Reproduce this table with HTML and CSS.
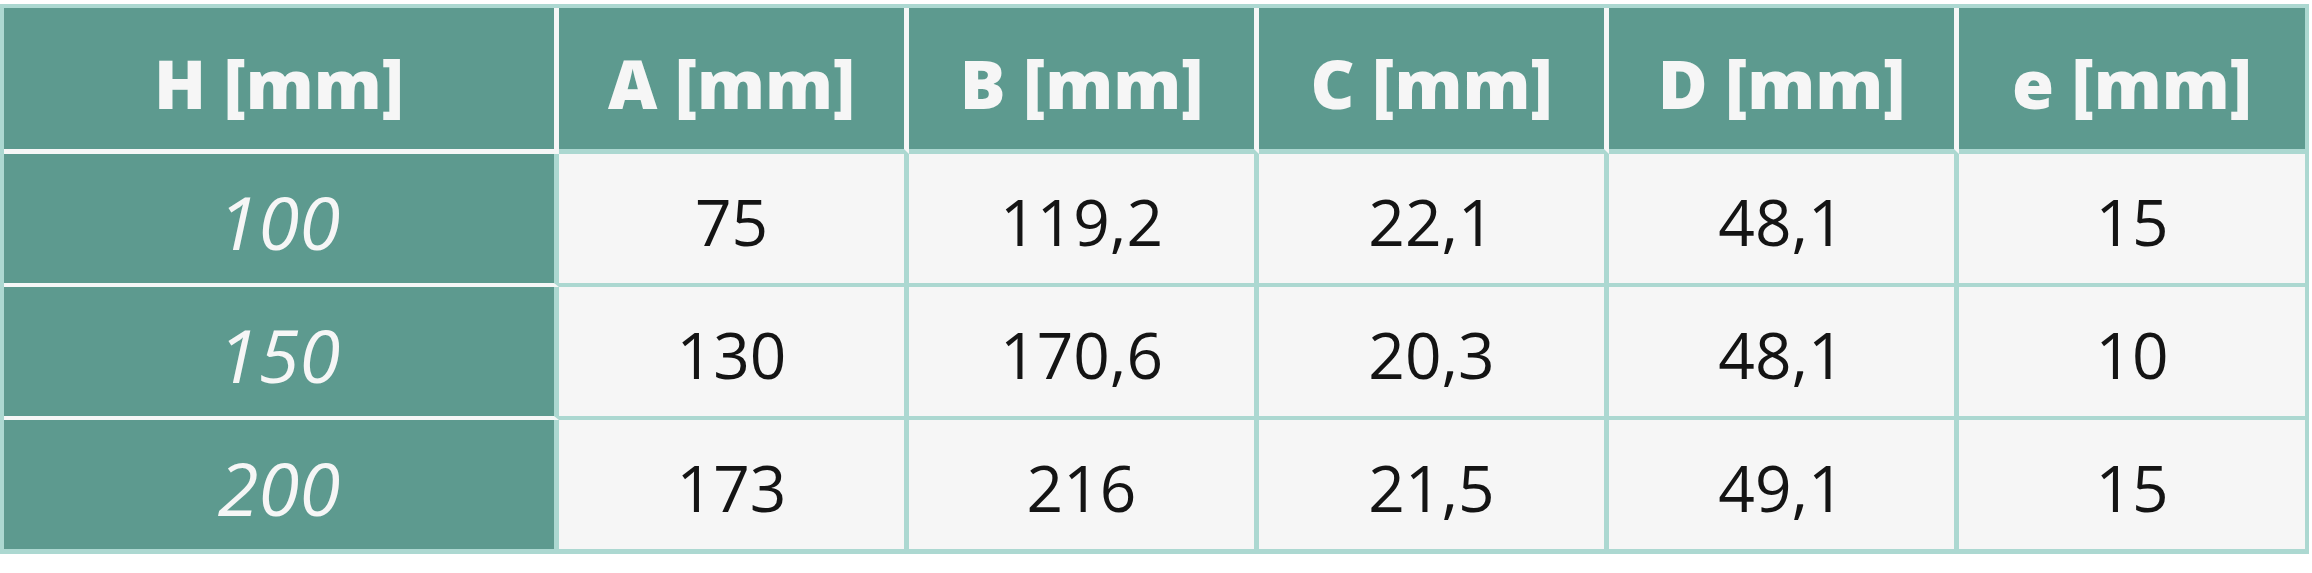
FILE: index.html
```html
<!DOCTYPE html>
<html lang="de">
<head>
<meta charset="utf-8">
<title>Maße</title>
<link rel="stylesheet" href="styles.css">
</head>
<body>
<table class="dims">
  <thead>
    <tr>
      <th class="c-first">H [mm]</th>
      <th>A [mm]</th>
      <th>B [mm]</th>
      <th>C [mm]</th>
      <th>D [mm]</th>
      <th class="c-last">e [mm]</th>
    </tr>
  </thead>
  <tbody>
    <tr>
      <td class="c-first">100</td>
      <td>75</td>
      <td>119,2</td>
      <td>22,1</td>
      <td>48,1</td>
      <td class="c-last">15</td>
    </tr>
    <tr>
      <td class="c-first">150</td>
      <td>130</td>
      <td>170,6</td>
      <td>20,3</td>
      <td>48,1</td>
      <td class="c-last">10</td>
    </tr>
    <tr class="r-last">
      <td class="c-first">200</td>
      <td>173</td>
      <td>216</td>
      <td>21,5</td>
      <td>49,1</td>
      <td class="c-last">15</td>
    </tr>
  </tbody>
</table>
</body>
</html>
```

FILE: styles.css
```css
html, body {
  margin: 0;
  padding: 0;
  background: #ffffff;
}

body {
  padding-top: 4px;
}

.dims {
  width: 2309px;
  table-layout: fixed;
  border-collapse: separate;
  border-spacing: 0;
  border-top: 4px solid #acd8d1;
  border-left: 4px solid #acd8d1;
  font-family: "Open Sans", "Noto Sans", sans-serif;
}

.dims th,
.dims td {
  box-sizing: border-box;
  padding: 0;
  text-align: center;
  vertical-align: middle;
  white-space: nowrap;
}

.dims th {
  width: 350px;
  height: 146px;
  background: #5d9a8f;
  color: #f6f6f6;
  font-weight: 800;
  font-size: 68px;
  line-height: 1;
  padding-top: 9px;
  border-right: 5px solid #f6f7f7;
  border-bottom: 5px solid #acd8d1;
}

.dims th.c-first {
  width: 555px;
  border-bottom-color: #f6f7f7;
}

.dims th.c-last {
  border-right: 4px solid #acd8d1;
}

.dims td {
  height: 133px;
  background: #f6f6f6;
  color: #141414;
  font-size: 64px;
  font-weight: 500;
  line-height: 1;
  padding-top: 6px;
  border-right: 5px solid #acd8d1;
  border-bottom: 4px solid #acd8d1;
}

.dims td.c-first {
  background: #5d9a8f;
  color: #f6f6f6;
  font-style: italic;
  font-weight: 400;
  font-size: 74px;
  border-bottom-color: #f6f7f7;
}

.dims td.c-last {
  border-right-width: 4px;
}

.dims tr.r-last td {
  height: 134px;
  border-bottom: 5px solid #acd8d1;
}
```
